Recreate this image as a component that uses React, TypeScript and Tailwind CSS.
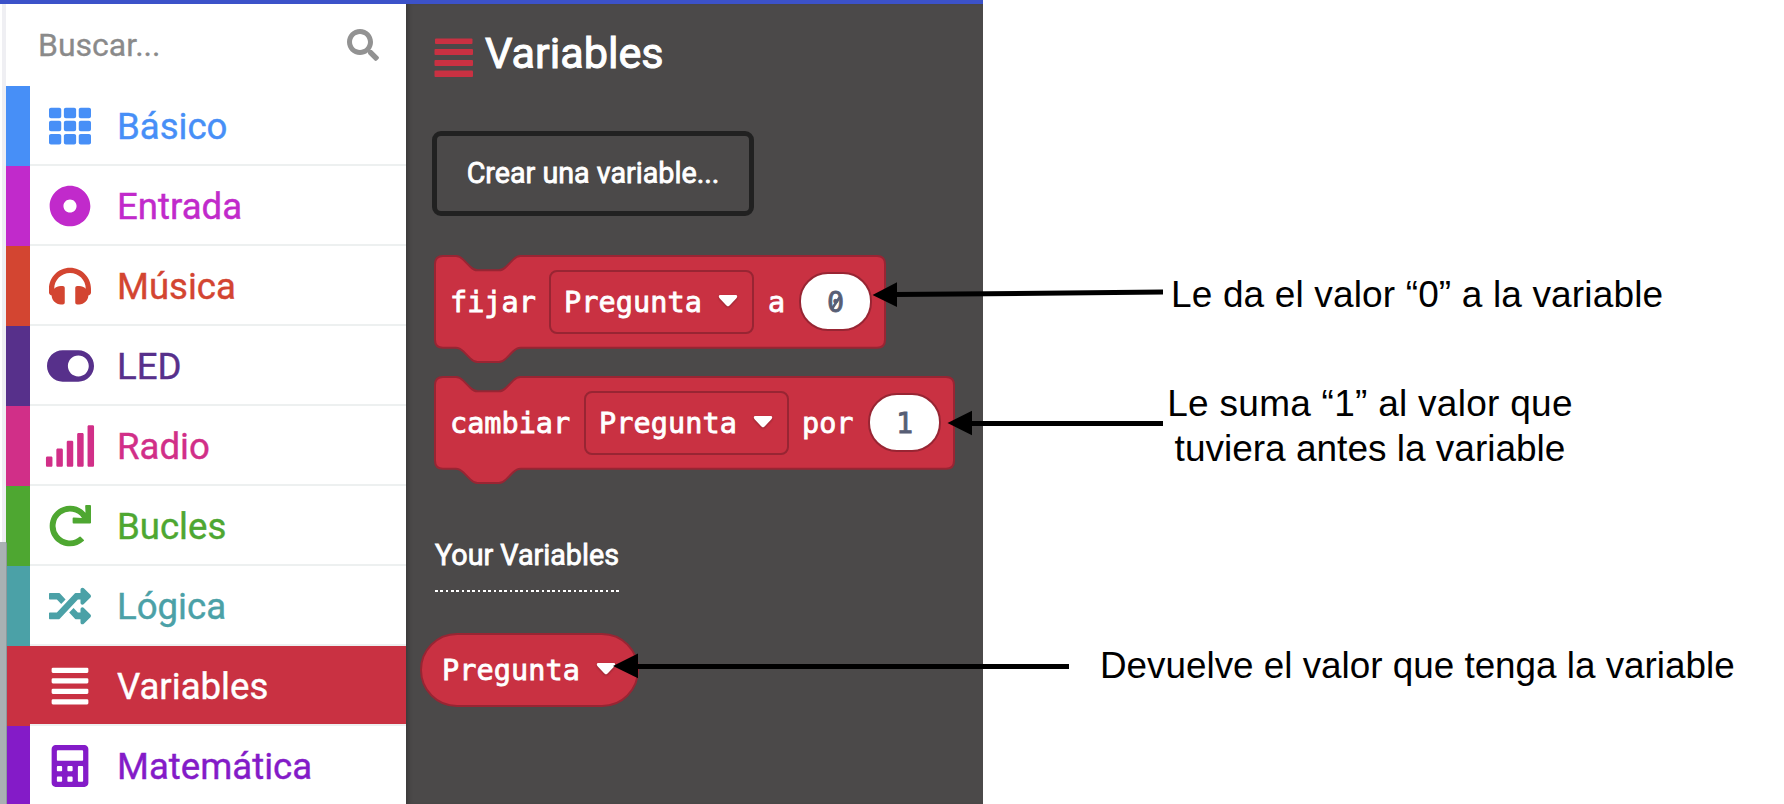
import type { ReactNode } from 'react';
import {
  FaAlignJustify,
  FaCalculator,
  FaDotCircle,
  FaHeadphones,
  FaRandom,
  FaRedo,
  FaSearch,
  FaSignal,
  FaTh,
  FaToggleOn,
} from 'react-icons/fa';

type Category = { label: string; bar: string; row: string; icon: ReactNode };

const categories: Category[] = [
  { label: 'Básico', bar: 'bg-[#478ff7]', row: 'text-[#478ff7]', icon: <FaTh /> },
  { label: 'Entrada', bar: 'bg-[#c12acb]', row: 'text-[#c12acb]', icon: <FaDotCircle /> },
  { label: 'Música', bar: 'bg-[#d34531]', row: 'text-[#d34531]', icon: <FaHeadphones /> },
  { label: 'LED', bar: 'bg-[#57308b]', row: 'text-[#57308b]', icon: <FaToggleOn className="h-[42px] w-[47px]" /> },
  { label: 'Radio', bar: 'bg-[#d12f88]', row: 'text-[#d12f88]', icon: <FaSignal className="h-[42px] w-[52px]" /> },
  { label: 'Bucles', bar: 'bg-[#4ea731]', row: 'text-[#4ea731]', icon: <FaRedo /> },
  { label: 'Lógica', bar: 'bg-[#4ba1a7]', row: 'text-[#4ba1a7]', icon: <FaRandom /> },
  { label: 'Variables', bar: 'bg-[#c93142]', row: 'bg-[#c93142] text-white', icon: <FaAlignJustify /> },
  { label: 'Matemática', bar: 'bg-[#841bc8]', row: 'text-[#841bc8]', icon: <FaCalculator /> },
];

function Sidebar() {
  return (
    <aside className="flex w-[400px] shrink-0 flex-col bg-white">
      <div className="flex h-[82px] shrink-0 items-center justify-between pr-[27px] pb-[1px] pl-8 text-[#8a8a8a]">
        <span className="text-[32px] leading-none [-webkit-text-stroke:0.3px_#8a8a8a]">Buscar...</span>
        <FaSearch className="size-8 text-[#929292]" />
      </div>
      {categories.map((c) => (
        <div key={c.label} className="flex h-20 shrink-0">
          <div className={`w-6 shrink-0 ${c.bar}`} />
          <div className={`flex grow items-center border-b-2 border-[#edf0f0] bg-clip-padding text-[36.6px] leading-none ${c.row}`}>
            <span className="flex w-20 justify-center pt-[1px] text-[42px]">{c.icon}</span>
            <span className="pt-[5px] pl-[7px] [-webkit-text-stroke:0.4px_currentColor]">{c.label}</span>
          </div>
        </div>
      ))}
    </aside>
  );
}

function Caret() {
  return (
    <svg width="20" height="14" viewBox="0 0 20 14" className="mb-[2px] shrink-0 drop-shadow-[0_1px_1px_rgba(0,0,0,0.3)]">
      <path d="M2.4 1H17.6Q19.4 1 19.2 2.6Q19.1 3.6 18.2 4.6L11.6 11.6Q10 13.2 8.4 11.6L1.8 4.6Q0.9 3.6 0.8 2.6Q0.6 1 2.4 1Z" fill="#fff" />
    </svg>
  );
}

function Dropdown() {
  return (
    <div className="mb-[1px] flex h-[64px] w-[205px] shrink-0 items-center justify-between rounded-[8px] border-2 border-[#982533] pr-[14px] pl-[13px]">
      <span className="pt-[3px] tracking-[0.1px]">Pregunta</span>
      <Caret />
    </div>
  );
}

function NumberField({ value }: { value: string }) {
  return (
    <div className="mb-[1px] flex h-[59px] w-[73px] shrink-0 items-center justify-center rounded-[29px] border-2 border-[#982533] bg-white pt-[3px] text-[#575e75] [-webkit-text-stroke:0.8px_#575e75]">
      <span className="relative">
        {value}
        {value === '0' && (
          <svg className="absolute inset-0" width="17" height="29" viewBox="0 0 17 29">
            <path d="M4.5 20.5L12.8 8" stroke="#575e75" strokeWidth="2.6" />
          </svg>
        )}
      </span>
    </div>
  );
}

function Block({ width, children }: { width: number; children: ReactNode }) {
  const right = width - 1;
  const d = `M1 9 Q1 1 9 1 H22 c3.6 0 5.4 1.8 7.2 3.6 l7.1 7.1 c1.8 1.8 3.6 3.6 7.2 3.6 h21.4 c3.6 0 5.4 -1.8 7.2 -3.6 l7.1 -7.1 c1.8 -1.8 3.6 -3.6 7.2 -3.6 H${right - 8} q8 0 8 8 V84.7 q0 8 -8 8 H86.4 c-3.6 0 -5.4 1.8 -7.2 3.6 l-7.1 7.1 c-1.8 1.8 -3.6 3.6 -7.2 3.6 h-21.4 c-3.6 0 -5.4 -1.8 -7.2 -3.6 l-7.1 -7.1 c-1.8 -1.8 -3.6 -3.6 -7.2 -3.6 H9 Q1 92.7 1 84.7 Z`;
  return (
    <div className="relative isolate h-[108px]" style={{ width }}>
      <svg className="absolute inset-0 -z-10" width={width} height="108" viewBox={`0 0 ${width} 108`}>
        <path d={d} fill="#c93142" stroke="#982533" strokeWidth="2" />
      </svg>
      <div className="flex h-[94px] items-center pl-4">{children}</div>
    </div>
  );
}

function Flyout() {
  return (
    <section className="flex w-[577px] shrink-0 flex-col bg-[#4b4949] pl-[26px] text-white shadow-[inset_5px_0_5px_-3px_rgba(0,0,0,0.25)]">
      <h1 className="mt-[24px] flex h-[54px] items-center text-[43.2px] leading-none [-webkit-text-stroke:1px_white]">
        <svg width="41" height="40" viewBox="0 0 41 40" className="mt-[5px] shrink-0" fill="#c93142">
          <rect x="3" y="0.5" width="37.5" height="5.5" rx="1" />
          <rect x="2.5" y="11" width="38.5" height="6" rx="1" />
          <rect x="2.5" y="22" width="38.5" height="6" rx="1" />
          <rect x="2.5" y="32.5" width="38.5" height="6.5" rx="1" />
        </svg>
        <span className="pb-[2px] pl-[12px]">Variables</span>
      </h1>
      <button className="mt-[49px] flex h-[85px] w-[322px] shrink-0 items-center justify-center rounded-[9px] border-[5px] border-[#212121] pb-[1px] text-[28.7px] leading-none [-webkit-text-stroke:0.8px_white]">
        Crear una variable...
      </button>
      <div className="mt-[39px] ml-[2px] flex flex-col gap-[13px] font-['DejaVu_Sans_Mono','Liberation_Mono',monospace] text-[28.5px] leading-none [-webkit-text-stroke:0.8px_white]">
        <Block width={452}>
          <span className="w-[99px] shrink-0 pt-[2px]">fijar</span>
          <Dropdown />
          <span className="w-[45px] shrink-0 pt-[2px] pl-[14px]">a</span>
          <NumberField value="0" />
        </Block>
        <Block width={521}>
          <span className="w-[134px] shrink-0 pt-[2px]">cambiar</span>
          <Dropdown />
          <span className="w-[79px] shrink-0 pt-[2px] pl-[13px]">por</span>
          <NumberField value="1" />
        </Block>
      </div>
      <h2 className="mt-[57px] ml-[3px] flex h-[51px] w-[185px] shrink-0 flex-col justify-between text-[28.7px] leading-none whitespace-nowrap [-webkit-text-stroke:0.8px_white]">
        <span>Your Variables</span>
        <span className="h-[2px] bg-[repeating-linear-gradient(90deg,white_0_2.67px,transparent_2.67px_5.33px)]" />
      </h2>
      <div className="mt-[41px] -ml-[12px] flex h-[74px] w-[219px] shrink-0 items-center justify-between rounded-full border-2 border-[#982533] bg-[#c93142] pr-[21px] pl-[20px] font-['DejaVu_Sans_Mono','Liberation_Mono',monospace] text-[28.5px] leading-none [-webkit-text-stroke:0.8px_white]">
        <span className="pt-[3px] tracking-[0.1px]">Pregunta</span>
        <Caret />
      </div>
    </section>
  );
}

function Notes() {
  return (
    <section className="flex grow flex-col pt-[268px] font-['Liberation_Sans',Arial,sans-serif] text-[37px] leading-[45px] whitespace-nowrap text-black">
      <p className="ml-[188px] tracking-[0.15px]">Le da el valor “0” a la variable</p>
      <p className="mt-[64px] ml-[184px] w-[406px] text-center">
        <span className="tracking-[0.27px]">Le suma “1” al valor que</span>
        <br />
        tuviera antes la variable
      </p>
      <p className="mt-[172px] ml-[117px] text-[36.85px]">Devuelve el valor que tenga la variable</p>
    </section>
  );
}

function Arrows() {
  return (
    <svg className="pointer-events-none absolute inset-0" width="1784" height="804" viewBox="0 0 1784 804">
      <g stroke="#000" strokeWidth="5">
        <path d="M895 294.6L1163 292" />
        <path d="M970 423.4H1163" />
        <path d="M636 666.4H1069" />
      </g>
      <path d="M872.5 295L897 282.3V307Z" />
      <path d="M947.5 423L972 410.7V435.2Z" />
      <path d="M613 666L638 653.5V678.3Z" />
    </svg>
  );
}

export default function App() {
  return (
    <main className="relative flex h-[804px] w-[1784px] flex-col overflow-hidden bg-white font-[Roboto,sans-serif]">
      <div className="h-1 w-[983px] shrink-0 bg-[#3c52c9]" />
      <div className="flex h-[800px]">
        <div className="flex w-[6px] shrink-0 flex-col">
          <div className="h-[538px] border-r-4 border-[#efeff3]" />
          <div className="relative z-10 w-[7px] grow rounded-tr-[2px] border-r border-[#8d999c] bg-[#a9b1b3]" />
        </div>
        <Sidebar />
        <Flyout />
        <Notes />
      </div>
      <Arrows />
    </main>
  );
}
